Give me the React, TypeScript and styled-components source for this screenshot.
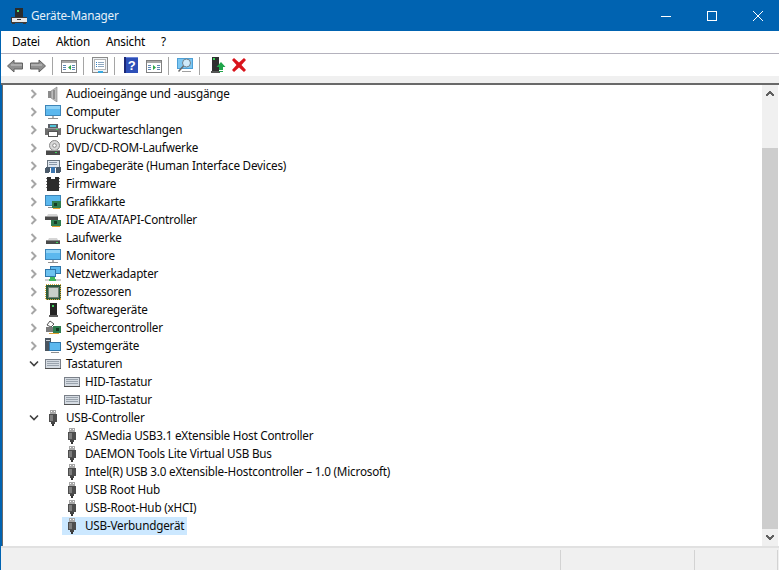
import React from 'react'
import styled, { createGlobalStyle } from 'styled-components'

const GlobalStyle = createGlobalStyle`
    html, body {
        margin: 0;
        padding: 0;
        width: 779px;
        height: 570px;
        overflow: hidden;
        background: #fff;
    }
`

const Window = styled.div`
    width: 779px;
    height: 570px;
    box-sizing: border-box;
    display: flex;
    flex-direction: column;
    border-left: 1px solid #0063b1;
    overflow: hidden;
    font-family: "Noto Sans", "Open Sans", sans-serif;
    font-size: 11.7px;
    letter-spacing: -0.2px;
    color: #000;
`

const TitleBar = styled.div`
    height: 31px;
    flex: none;
    display: flex;
    align-items: center;
    background: #0063b1;
    padding-left: 10px;
    color: #e6f0f8;
`

const TitleText = styled.span`
    margin-left: 4px;
    flex: 1;
    padding-bottom: 1px;
`

const WindowControls = styled.div`
    display: flex;
    margin-right: -2px;
`

const ControlButton = styled.div`
    width: 46px;
    height: 31px;
    display: flex;
    align-items: center;
    justify-content: center;
`

const MenuBar = styled.div`
    height: 22px;
    flex: none;
    display: flex;
    align-items: center;
    gap: 16px;
    padding-left: 11px;
    border-bottom: 1px solid #b4b2bd;
`

const MenuItem = styled.span`
    line-height: 20px;
    padding-bottom: 2px;
`

const Toolbar = styled.div`
    height: 22px;
    flex: none;
    display: flex;
    align-items: center;
    padding-left: 6px;
`

const ToolSeparator = styled.div`
    width: 1px;
    height: 18px;
    margin: 1px 8px 0 6px;
    background: #a5a5a5;
`

const ToolIcon = styled.div<{ $gap?: number; $lead?: number }>`
    width: 16px;
    height: 16px;
    flex: none;
    margin-left: ${p => p.$lead ?? 0}px;
    margin-right: ${p => p.$gap ?? 0}px;
    display: flex;
`

const Band = styled.div`
    height: 7px;
    flex: none;
    background: #f0f0f0;
    border-bottom: 2px solid #696969;
`

const Body = styled.div`
    flex: 1;
    min-height: 0;
    display: flex;
    border-left: 1px solid #0063b1;
`

const Tree = styled.div`
    flex: 1;
    min-width: 0;
    border-left: 1px solid #696969;
`

const Row = styled.div<{ $depth: number }>`
    height: 18px;
    display: flex;
    align-items: center;
    padding-left: ${p => (p.$depth ? 59 : 22)}px;
`

const Expander = styled.div`
    width: 18px;
    height: 18px;
    flex: none;
    display: flex;
    align-items: center;
    justify-content: center;
`

const RowContent = styled.div<{ $selected?: boolean }>`
    height: 18px;
    display: flex;
    align-items: center;
    padding: 0 3px 0 2px;
    background: ${p => (p.$selected ? '#cce8ff' : 'transparent')};
`

const RowLabel = styled.span`
    margin-left: 5px;
    padding-bottom: 2px;
    white-space: nowrap;
    color: #0a0a0a;
`

const IconBox = styled.div`
    width: 16px;
    height: 16px;
    flex: none;
    display: flex;
`

const ScrollBar = styled.div`
    width: 16px;
    flex: none;
    margin-right: 1px;
    display: flex;
    flex-direction: column;
    background: #f0f0f0;
`

const ScrollButton = styled.div`
    height: 17px;
    flex: none;
    display: flex;
    align-items: center;
    justify-content: center;
`

const ScrollTrack = styled.div`
    flex: 1;
    display: flex;
    padding-top: 46px;
`

const ScrollThumb = styled.div`
    flex: 1;
    background: #cdcdcd;
`

const StatusBar = styled.div`
    height: 24px;
    flex: none;
    box-sizing: border-box;
    display: flex;
    background: #f0f0f0;
    border-top: 2px solid #e1e1e1;
    padding: 2px 1px 0 0;
`

const StatusCell = styled.div<{ $width?: number }>`
    flex: ${p => (p.$width ? `0 0 ${p.$width}px` : '1')};
    border-right: 1px solid #d3d3d3;
`

const Svg = ({ children, size = 16 }: { children: React.ReactNode; size?: number }) => (
    <svg width={size} height={size} viewBox="0 0 16 16" shapeRendering="crispEdges">
        {children}
    </svg>
)

const Back = () => (
    <Svg>
        <path d="M7 3 L0.5 9 L7 15 V12 H15.5 V6 H7 Z" fill="#8f8f8f" stroke="#626262" shapeRendering="auto" />
        <rect x="4" y="7" width="11" height="2" fill="#adadad" />
    </Svg>
)
const Forward = () => (
    <Svg>
        <path d="M9 3 L15.5 9 L9 15 V12 H0.5 V6 H9 Z" fill="#8f8f8f" stroke="#626262" shapeRendering="auto" />
        <rect x="1" y="7" width="11" height="2" fill="#adadad" />
    </Svg>
)

const PaneWindow = ({ right }: { right?: boolean }) => (
    <Svg>
        <rect x="0.5" y="3.5" width="15" height="12" fill="#fff" stroke="#808080" />
        <rect x="1" y="4" width="14" height="2" fill="#a8a8a8" />
        <rect x="2" y="8" width="3" height="1" fill="#5b87b5" />
        <rect x="2" y="10" width="3" height="1" fill="#5b87b5" />
        <rect x="2" y="12" width="3" height="1" fill="#5b87b5" />
        <rect x="11" y="8" width="3" height="1" fill="#5b87b5" />
        <rect x="11" y="10" width="3" height="1" fill="#5b87b5" />
        <rect x="11" y="12" width="3" height="1" fill="#5b87b5" />
        {right
            ? <path d="M7 8 L10 10.5 L7 13 Z" fill="#2ea64a" shapeRendering="auto" />
            : <path d="M10 8 L7 10.5 L10 13 Z" fill="#2ea64a" shapeRendering="auto" />}
    </Svg>
)

const PropertySheet = () => (
    <Svg>
        <rect x="0.5" y="0.5" width="15" height="15" fill="#eef1f4" stroke="#8a8a8a" />
        <rect x="2.5" y="2.5" width="11" height="10" fill="#fff" stroke="#b5b5b5" />
        <rect x="4" y="5" width="1" height="1" fill="#2f7fc1" />
        <rect x="6" y="5" width="6" height="1" fill="#8fa8c0" />
        <rect x="4" y="7" width="1" height="1" fill="#2f7fc1" />
        <rect x="6" y="7" width="6" height="1" fill="#8fa8c0" />
        <rect x="4" y="9" width="1" height="1" fill="#2f7fc1" />
        <rect x="6" y="9" width="6" height="1" fill="#8fa8c0" />
        <rect x="6" y="14" width="5" height="2" fill="#35a8e0" />
    </Svg>
)

const HelpBook = () => (
    <Svg>
        <rect x="1" y="0" width="14" height="16" fill="#2d4fb8" />
        <rect x="1" y="0" width="2" height="16" fill="#1b2878" />
        <rect x="3" y="0" width="12" height="1" fill="#6d86d8" />
        <text x="8.5" y="13" fontSize="13" fontWeight="700" fill="#fff" textAnchor="middle" fontFamily="Liberation Sans">?</text>
    </Svg>
)

const ScanMonitor = () => (
    <Svg>
        <rect x="0.5" y="1.5" width="15" height="10" fill="#7cc7f2" stroke="#4e9fd6" />
        <circle cx="9.5" cy="6" r="4" fill="#cfeafa" stroke="#70808c" shapeRendering="auto" />
        <path d="M6.5 9 L1.5 14.5" stroke="#6a6a6a" strokeWidth="1.5" shapeRendering="auto" />
        <rect x="5" y="14" width="9" height="1" fill="#a0a0a0" />
    </Svg>
)

const UpdateDriver = () => (
    <Svg>
        <rect x="2" y="0" width="7" height="14" fill="#2f2f2f" />
        <rect x="3" y="1" width="2" height="2" fill="#3fd35c" />
        <rect x="1" y="14" width="9" height="2" fill="#555" />
        <path d="M11 5 L15.5 10 H13 V13 H9 V10 H6.5 Z" fill="#1fa54a" shapeRendering="auto" />
        <rect x="9" y="14" width="4" height="1" fill="#1fa54a" />
    </Svg>
)

const RedCross = () => (
    <Svg>
        <path d="M1 3 L3 1 L8 5.5 L13 1 L15 3 L10.5 8 L15 13 L13 15 L8 10.5 L3 15 L1 13 L5.5 8 Z" fill="#d9141c" shapeRendering="auto" />
    </Svg>
)

const DeviceManagerLogo = () => (
    <Svg>
        <rect x="4" y="0" width="8" height="9" fill="#2b2b2b" />
        <rect x="6" y="2" width="2" height="2" fill="#4fe070" />
        <rect x="0" y="9" width="16" height="5" fill="#e8e8e8" stroke="#3a3a3a" strokeWidth="1" />
        <rect x="6" y="11" width="4" height="1" fill="#3a3a3a" />
        <rect x="1" y="14" width="3" height="2" fill="#3a3a3a" />
        <rect x="12" y="14" width="3" height="2" fill="#3a3a3a" />
    </Svg>
)

const Speaker = () => (
    <Svg>
        <rect x="3" y="5" width="3" height="7" fill="#8c8c8c" />
        <path d="M6 5 L12 1 V16 L6 12 Z" fill="#bdbdbd" stroke="#7f7f7f" strokeWidth="0.6" shapeRendering="auto" />
        <rect x="8" y="4" width="2" height="9" fill="#8e8e8e" />
    </Svg>
)

const Monitor = () => (
    <Svg>
        <rect x="0.5" y="1.5" width="15" height="10" fill="#5cb8ee" stroke="#3d85b8" />
        <rect x="1" y="2" width="14" height="3" fill="#8fd2f6" />
        <rect x="7" y="12" width="2" height="2" fill="#b0b0b0" />
        <rect x="3" y="14" width="10" height="1" fill="#8f8f8f" />
    </Svg>
)

const Printer = () => (
    <Svg>
        <rect x="3" y="2" width="10" height="4" fill="#5a6068" />
        <rect x="5" y="3" width="6" height="2" fill="#4fc4d8" />
        <rect x="0" y="6" width="16" height="7" fill="#6e6e6e" />
        <rect x="1" y="6" width="14" height="1" fill="#9a9a9a" />
        <rect x="3.5" y="9.5" width="9" height="5" fill="#fff" stroke="#555" />
        <rect x="11" y="7" width="2" height="1" fill="#3fd35c" />
    </Svg>
)

const Drive = () => (
    <Svg>
        <path d="M3 10 L4 8 H12 L13 10 Z" fill="#d5d5d5" shapeRendering="auto" />
        <rect x="1" y="10" width="14" height="4" fill="#4a4a4a" />
        <rect x="1" y="10" width="14" height="1" fill="#8a8a8a" />
        <rect x="11" y="12" width="2" height="1" fill="#3fd35c" />
    </Svg>
)

const Disc = () => (
    <Svg>
        <circle cx="9.5" cy="5.5" r="5" fill="#d8d8d8" stroke="#8a8a8a" shapeRendering="auto" />
        <circle cx="9.5" cy="5.5" r="1.8" fill="#fff" stroke="#8a8a8a" shapeRendering="auto" />
        <rect x="1" y="10" width="14" height="5" fill="#4a4a4a" />
        <rect x="1" y="10" width="14" height="1" fill="#a0a0a0" />
        <rect x="10" y="12" width="2" height="1" fill="#3fd35c" />
    </Svg>
)

const InputDevices = () => (
    <Svg>
        <rect x="2" y="2" width="12" height="7" fill="#dfe6ee" stroke="#6a7580" />
        <rect x="4" y="4" width="8" height="1" fill="#8a98a8" />
        <rect x="4" y="6" width="8" height="1" fill="#8a98a8" />
        <rect x="0" y="9" width="5" height="6" rx="2" fill="#4a5a6a" />
        <rect x="11" y="9" width="5" height="6" rx="2" fill="#4a5a6a" />
        <rect x="6" y="9" width="4" height="6" fill="#3b76b0" />
    </Svg>
)

const Chip = () => (
    <Svg>
        <rect x="2" y="1" width="12" height="14" fill="#2c2c2c" />
        <rect x="1" y="2" width="1" height="1" fill="#777" />
        <rect x="1" y="5" width="1" height="1" fill="#777" />
        <rect x="1" y="8" width="1" height="1" fill="#777" />
        <rect x="1" y="11" width="1" height="1" fill="#777" />
        <rect x="14" y="2" width="1" height="1" fill="#777" />
        <rect x="14" y="5" width="1" height="1" fill="#777" />
        <rect x="14" y="8" width="1" height="1" fill="#777" />
        <rect x="14" y="11" width="1" height="1" fill="#777" />
        <rect x="6" y="1" width="4" height="2" fill="#fff" />
    </Svg>
)

const GraphicsCard = () => (
    <Svg>
        <rect x="0.5" y="1.5" width="15" height="10" fill="#5cb8ee" stroke="#3d85b8" />
        <rect x="3" y="13" width="5" height="1" fill="#8f8f8f" />
        <rect x="7" y="7" width="9" height="7" fill="#2f7d4f" />
        <rect x="9" y="9" width="3" height="3" fill="#163d26" />
        <rect x="8" y="14" width="7" height="1" fill="#e0a030" />
    </Svg>
)

const IdeController = () => (
    <Svg>
        <path d="M2 4 L3 2 H12 L13 4 Z" fill="#d5d5d5" shapeRendering="auto" />
        <rect x="0" y="4" width="13" height="4" fill="#4a4a4a" />
        <rect x="0" y="4" width="13" height="1" fill="#9a9a9a" />
        <rect x="6" y="8" width="10" height="6" fill="#2f7d4f" />
        <rect x="9" y="9" width="3" height="3" fill="#163d26" />
        <rect x="7" y="14" width="8" height="1" fill="#e0a030" />
    </Svg>
)

const NetworkAdapter = () => (
    <Svg>
        <rect x="5.5" y="0.5" width="10" height="7" fill="#5cb8ee" stroke="#2f76aa" />
        <rect x="0.5" y="3.5" width="10" height="7" fill="#6cc2f0" stroke="#2f76aa" />
        <rect x="0" y="13" width="16" height="2" fill="#cfcfcf" />
        <rect x="5" y="11" width="5" height="2" fill="#3fb85c" />
        <rect x="4" y="13" width="7" height="2" fill="#3fb85c" />
    </Svg>
)

const Cpu = () => (
    <Svg>
        <rect x="0.5" y="0.5" width="15" height="15" fill="#2c5a3c" stroke="#d9a93a" strokeDasharray="1 1" />
        <rect x="1" y="1" width="14" height="14" fill="#2c5a3c" />
        <rect x="3" y="3" width="10" height="10" fill="#c9cfc9" stroke="#6f7f72" />
    </Svg>
)

const SoftwareDevice = () => (
    <Svg>
        <rect x="5" y="1" width="7" height="12" fill="#252525" />
        <rect x="7" y="3" width="2" height="2" fill="#3fd35c" />
        <rect x="4" y="13" width="9" height="2" fill="#5c5c5c" />
    </Svg>
)

const StorageController = () => (
    <Svg>
        <path d="M5 1 L9 4 L6 7 L2 5 Z" fill="#fff" stroke="#555" shapeRendering="auto" />
        <rect x="1" y="7" width="9" height="5" fill="#7a7a7a" />
        <rect x="8" y="6" width="8" height="7" fill="#2f7d4f" />
        <rect x="11" y="8" width="3" height="3" fill="#163d26" />
        <rect x="4" y="13" width="10" height="1" fill="#e0a030" />
    </Svg>
)

const SystemDevice = () => (
    <Svg>
        <rect x="0" y="0" width="6" height="13" fill="#4a5560" />
        <rect x="1" y="2" width="4" height="1" fill="#c8d0d8" />
        <rect x="4.5" y="4.5" width="11" height="8" fill="#5cb8ee" stroke="#2f76aa" />
        <rect x="6" y="14" width="8" height="1" fill="#8f8f8f" />
    </Svg>
)

const Keyboard = () => (
    <Svg>
        <rect x="0.5" y="3.5" width="15" height="9" fill="#d5dbe2" stroke="#7a8089" />
        <rect x="2" y="5" width="12" height="1" fill="#9aa3ad" />
        <rect x="2" y="7" width="12" height="1" fill="#9aa3ad" />
        <rect x="2" y="9" width="12" height="1" fill="#9aa3ad" />
        <rect x="0" y="12" width="16" height="1" fill="#4f4f4f" />
    </Svg>
)

const UsbPlug = () => (
    <Svg>
        <rect x="5" y="0" width="6" height="4" fill="#a8a8a8" />
        <rect x="6" y="1" width="1" height="1" fill="#fff" />
        <rect x="9" y="1" width="1" height="1" fill="#fff" />
        <rect x="4" y="4" width="8" height="8" fill="#4d4d4d" />
        <rect x="5" y="5" width="3" height="6" fill="#7d7d7d" />
        <rect x="6" y="12" width="4" height="2" fill="#444" />
        <rect x="7" y="14" width="2" height="2" fill="#333" />
    </Svg>
)

const ChevronRight = () => (
    <svg width="8" height="10" viewBox="0 0 8 10">
        <path d="M1.5 1 L5.5 5 L1.5 9" fill="none" stroke="#a6a6a6" strokeWidth="2" />
    </svg>
)

const ChevronDown = () => (
    <svg width="10" height="8" viewBox="0 0 10 8">
        <path d="M1 1.5 L5 5.5 L9 1.5" fill="none" stroke="#404040" strokeWidth="1.6" />
    </svg>
)

const ScrollArrow = ({ down }: { down?: boolean }) => (
    <svg width="8" height="6" viewBox="0 0 8 6" shapeRendering="crispEdges">
        <path d={down ? 'M0 0 H2 V1 H3 V2 H5 V1 H6 V0 H8 V2 H7 V3 H6 V4 H5 V5 H3 V4 H2 V3 H1 V2 H0 Z' : 'M3 0 H5 V1 H6 V2 H7 V3 H8 V5 H6 V4 H5 V3 H3 V4 H2 V5 H0 V3 H1 V2 H2 V1 H3 Z'} fill="#606060" />
    </svg>
)

type TreeNode = {
    label: string
    icon: React.ComponentType
    depth?: number
    open?: boolean
    selected?: boolean
}

const nodes: TreeNode[] = [
    { label: 'Audioeingänge und -ausgänge', icon: Speaker },
    { label: 'Computer', icon: Monitor },
    { label: 'Druckwarteschlangen', icon: Printer },
    { label: 'DVD/CD-ROM-Laufwerke', icon: Disc },
    { label: 'Eingabegeräte (Human Interface Devices)', icon: InputDevices },
    { label: 'Firmware', icon: Chip },
    { label: 'Grafikkarte', icon: GraphicsCard },
    { label: 'IDE ATA/ATAPI-Controller', icon: IdeController },
    { label: 'Laufwerke', icon: Drive },
    { label: 'Monitore', icon: Monitor },
    { label: 'Netzwerkadapter', icon: NetworkAdapter },
    { label: 'Prozessoren', icon: Cpu },
    { label: 'Softwaregeräte', icon: SoftwareDevice },
    { label: 'Speichercontroller', icon: StorageController },
    { label: 'Systemgeräte', icon: SystemDevice },
    { label: 'Tastaturen', icon: Keyboard, open: true },
    { label: 'HID-Tastatur', icon: Keyboard, depth: 1 },
    { label: 'HID-Tastatur', icon: Keyboard, depth: 1 },
    { label: 'USB-Controller', icon: UsbPlug, open: true },
    { label: 'ASMedia USB3.1 eXtensible Host Controller', icon: UsbPlug, depth: 1 },
    { label: 'DAEMON Tools Lite Virtual USB Bus', icon: UsbPlug, depth: 1 },
    { label: 'Intel(R) USB 3.0 eXtensible-Hostcontroller – 1.0 (Microsoft)', icon: UsbPlug, depth: 1 },
    { label: 'USB Root Hub', icon: UsbPlug, depth: 1 },
    { label: 'USB-Root-Hub (xHCI)', icon: UsbPlug, depth: 1 },
    { label: 'USB-Verbundgerät', icon: UsbPlug, depth: 1, selected: true },
]

function App() {
    return (
        <Window>
            <GlobalStyle />
            <TitleBar>
                <IconBox><DeviceManagerLogo /></IconBox>
                <TitleText>Geräte-Manager</TitleText>
                <WindowControls>
                    <ControlButton>
                        <svg width="10" height="10" viewBox="0 0 10 10"><rect x="0" y="5" width="10" height="1" fill="#fff" /></svg>
                    </ControlButton>
                    <ControlButton>
                        <svg width="10" height="10" viewBox="0 0 10 10"><rect x="0.5" y="0.5" width="9" height="9" fill="none" stroke="#fff" /></svg>
                    </ControlButton>
                    <ControlButton>
                        <svg width="10" height="10" viewBox="0 0 10 10"><path d="M0 0 L10 10 M10 0 L0 10" stroke="#fff" /></svg>
                    </ControlButton>
                </WindowControls>
            </TitleBar>
            <MenuBar>
                <MenuItem>Datei</MenuItem>
                <MenuItem>Aktion</MenuItem>
                <MenuItem>Ansicht</MenuItem>
                <MenuItem>?</MenuItem>
            </MenuBar>
            <Toolbar>
                <ToolIcon $gap={7}><Back /></ToolIcon>
                <ToolIcon><Forward /></ToolIcon>
                <ToolSeparator />
                <ToolIcon><PaneWindow /></ToolIcon>
                <ToolSeparator />
                <ToolIcon><PropertySheet /></ToolIcon>
                <ToolSeparator />
                <ToolIcon $gap={7}><HelpBook /></ToolIcon>
                <ToolIcon><PaneWindow right /></ToolIcon>
                <ToolSeparator />
                <ToolIcon><ScanMonitor /></ToolIcon>
                <ToolSeparator />
                <ToolIcon $lead={2} $gap={5}><UpdateDriver /></ToolIcon>
                <ToolIcon><RedCross /></ToolIcon>
            </Toolbar>
            <Band />
            <Body>
                <Tree>
                    {nodes.map((node, i) => {
                        const Icon = node.icon
                        return (
                            <Row key={i} $depth={node.depth ?? 0}>
                                {!node.depth && (
                                    <Expander>
                                        {node.open ? <ChevronDown /> : <ChevronRight />}
                                    </Expander>
                                )}
                                <RowContent $selected={node.selected}>
                                    <IconBox><Icon /></IconBox>
                                    <RowLabel>{node.label}</RowLabel>
                                </RowContent>
                            </Row>
                        )
                    })}
                </Tree>
                <ScrollBar>
                    <ScrollButton><ScrollArrow /></ScrollButton>
                    <ScrollTrack><ScrollThumb /></ScrollTrack>
                    <ScrollButton><ScrollArrow down /></ScrollButton>
                </ScrollBar>
            </Body>
            <StatusBar>
                <StatusCell $width={559} />
                <StatusCell $width={133} />
                <StatusCell />
            </StatusBar>
        </Window>
    )
}

export default App
